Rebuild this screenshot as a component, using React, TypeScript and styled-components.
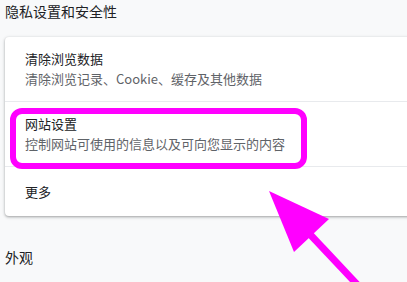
import React from "react";
import styled, { createGlobalStyle } from "styled-components";

const Global = createGlobalStyle`
  html, body {
    margin: 0;
    padding: 0;
    background: #f8f9fa;
    overflow: hidden;
  }
  body {
    font-family: "Noto Sans CJK SC", "Noto Sans", Roboto, sans-serif;
    color: #202124;
  }
`;

const Page = styled.div`
  position: relative;
  width: 407px;
  height: 282px;
  padding: 1px 0 0 5px;
  box-sizing: border-box;
  overflow: hidden;
`;

const SectionTitle = styled.h2<{ $gap?: number }>`
  margin: ${(p) => p.$gap ?? 0}px 0 0 0;
  font-size: 14px;
  font-weight: 400;
  line-height: 20px;
  color: #202124;
`;

const Card = styled.div`
  position: relative;
  margin-top: 16px;
  margin-right: -30px;
  background: #ffffff;
  border-radius: 4px;
  box-shadow: 0 1px 2px 0 rgba(60, 64, 67, 0.3),
    0 1px 3px 1px rgba(60, 64, 67, 0.15);
  display: flex;
  flex-direction: column;
`;

const Row = styled.div<{ $divider?: boolean; $compact?: boolean }>`
  display: flex;
  flex-direction: column;
  justify-content: center;
  padding: ${(p) => (p.$compact ? "0 20px" : "12px 20px")};
  height: ${(p) => (p.$compact ? "49px" : "auto")};
  box-sizing: border-box;
  border-bottom: ${(p) => (p.$divider ? "1px solid #e8eaed" : "none")};
`;

const RowTitle = styled.div`
  font-size: 13px;
  line-height: 20px;
  color: #202124;
`;

const RowSub = styled.div`
  font-size: 13px;
  line-height: 20px;
  color: #5f6368;
`;

const Highlight = styled.div`
  position: absolute;
  left: 5px;
  top: 71px;
  width: 297px;
  height: 61px;
  box-sizing: border-box;
  border: 6px solid #ff00ff;
  border-radius: 12px;
  pointer-events: none;
`;

const ArrowLayer = styled.svg`
  position: absolute;
  left: 0;
  top: 0;
  width: 407px;
  height: 282px;
  pointer-events: none;
`;

export default function App() {
  return (
    <>
      <Global />
      <Page>
        <SectionTitle>隐私设置和安全性</SectionTitle>
        <Card>
          <Row $divider>
            <RowTitle>清除浏览数据</RowTitle>
            <RowSub>清除浏览记录、Cookie、缓存及其他数据</RowSub>
          </Row>
          <Row $divider>
            <RowTitle>网站设置</RowTitle>
            <RowSub>控制网站可使用的信息以及可向您显示的内容</RowSub>
          </Row>
          <Row $compact>
            <RowTitle>更多</RowTitle>
          </Row>
          <Highlight />
        </Card>
        <SectionTitle $gap={31}>外观</SectionTitle>
        <ArrowLayer viewBox="0 0 407 282">
          <line
            x1="305"
            y1="229"
            x2="368"
            y2="296"
            stroke="#ff00ff"
            strokeWidth="7"
          />
          <polygon points="269,191 329,219 294,252" fill="#ff00ff" />
        </ArrowLayer>
      </Page>
    </>
  );
}
